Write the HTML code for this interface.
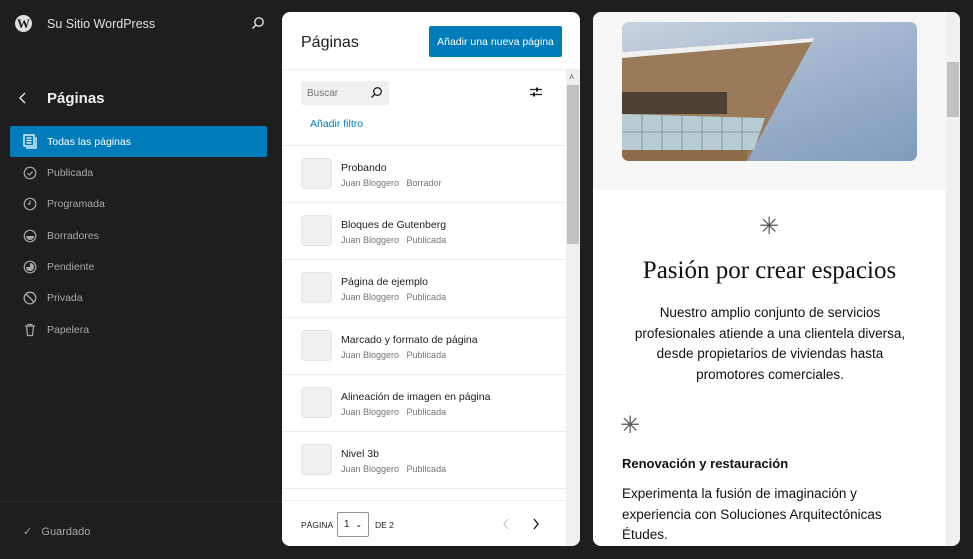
<!DOCTYPE html>
<html><head><meta charset="utf-8"><style>
*{box-sizing:border-box;margin:0;padding:0}
body{width:973px;height:559px;background:#1e1e1e;font-family:"Liberation Sans",sans-serif;position:relative;overflow:hidden;color:#1e1e1e}
.abs{position:absolute}
.side{color:#e0e0e0;font-size:12px}
.nav{position:absolute;left:10px;width:257px;height:31px;display:flex;align-items:center;padding-left:13px;color:#a8a8a8;font-size:10.5px}
.nav svg{margin-right:10px}
.nav.act{background:#007cba;color:#fff;border-radius:2px}
.panel{background:#fff;border-radius:8px;overflow:hidden}
.row{position:absolute;left:0;width:284px;height:57px;border-top:1px solid #ececec}
.thumb{position:absolute;left:19px;top:12px;width:31px;height:31px;background:#f0f0f0;border:1px solid #e4e4e4;border-radius:4px}
.t1{position:absolute;left:59px;top:16px;font-size:10.5px;color:#1e1e1e}
.t2{position:absolute;left:59px;top:32px;font-size:9px;color:#757575}
</style></head><body>
<!-- sidebar -->
<div class="abs" style="left:15px;top:15px;width:17px;height:17px;border-radius:50%;background:#e0e0e0;color:#1e1e1e;font-family:'Liberation Serif',serif;font-weight:bold;font-size:13px;line-height:17px;text-align:center">W</div>
<div class="abs side" style="left:47px;top:17px;font-size:12.5px">Su Sitio WordPress</div>
<svg class="abs" style="left:251px;top:16px" width="14" height="14" viewBox="0 0 14 14"><circle cx="8" cy="6" r="4.2" stroke="#e0e0e0" stroke-width="1.4" fill="none"/><path d="M5 9L1.5 12.5" stroke="#e0e0e0" stroke-width="1.5"/></svg>
<svg class="abs" style="left:18px;top:92px" width="10" height="12"><path d="M7 1L2 6l5 5" stroke="#e0e0e0" stroke-width="1.5" fill="none"/></svg>
<div class="abs" style="left:47px;top:90px;font-size:15px;color:#f0f0f0;font-weight:bold">Páginas</div>
<div class="nav act" style="top:126px"><svg width="14" height="15" viewBox="0 0 14 15"><rect x="1" y="1" width="10" height="11" fill="none" stroke="#fff" stroke-width="1.3"/><path d="M3.5 4h5M3.5 6.5h5M3.5 9h5M13 3v11H3" stroke="#fff" stroke-width="1.2" fill="none"/></svg><span style="color:#fff">Todas las páginas</span></div>
<div class="nav" style="top:157px"><svg width="14" height="14"><circle cx="7" cy="7" r="5.8" fill="none" stroke="#a8a8a8" stroke-width="1.2"/><path d="M4.5 7l2 2 3-3.5" stroke="#a8a8a8" stroke-width="1.2" fill="none"/></svg>Publicada</div>
<div class="nav" style="top:188px"><svg width="14" height="14"><circle cx="7" cy="7" r="5.8" fill="none" stroke="#a8a8a8" stroke-width="1.2"/><path d="M7 3.5V7H4.5" stroke="#a8a8a8" stroke-width="1.2" fill="none"/></svg>Programada</div>
<div class="nav" style="top:220px"><svg width="14" height="14"><circle cx="7" cy="7" r="5.8" fill="none" stroke="#a8a8a8" stroke-width="1.2"/><path d="M3 7h8a4 4 0 0 1-8 0z" fill="#a8a8a8"/></svg>Borradores</div>
<div class="nav" style="top:251px"><svg width="14" height="14"><circle cx="7" cy="7" r="5.8" fill="none" stroke="#a8a8a8" stroke-width="1.2"/><path d="M7 3a4 4 0 1 1-4 4h4z" fill="#a8a8a8"/></svg>Pendiente</div>
<div class="nav" style="top:282px"><svg width="14" height="14"><circle cx="7" cy="7" r="5.8" fill="none" stroke="#a8a8a8" stroke-width="1.3"/><path d="M3 3l8 8" stroke="#a8a8a8" stroke-width="1.3"/></svg>Privada</div>
<div class="nav" style="top:314px"><svg width="14" height="14"><path d="M2 3h10M5 3V1.5h4V3M3.5 3l1 9.5h5l1-9.5" stroke="#a8a8a8" stroke-width="1.2" fill="none"/></svg>Papelera</div>
<div class="abs" style="left:0;top:501px;width:282px;height:1px;background:#2c2c2c"></div>
<div class="abs" style="left:23px;top:525px;font-size:11px;color:#a8a8a8">✓&nbsp;&nbsp;&nbsp;Guardado</div>

<!-- middle panel -->
<div class="abs panel" style="left:282px;top:12px;width:298px;height:534px">
  <div class="abs" style="left:19px;top:22px;font-size:16px">Páginas</div>
  <div class="abs" style="left:147px;top:14px;width:133px;height:31px;background:#007cba;color:#fff;font-size:10.5px;border-radius:2px;display:flex;align-items:center;justify-content:center">Añadir una nueva página</div>
  <div class="abs" style="left:0;top:57px;width:298px;height:1px;background:#eee"></div>
  <div class="abs" style="left:19px;top:69px;width:88px;height:24px;background:#f0f0f0;border-radius:2px;font-size:10px;color:#757575;padding:7px 0 0 6px">Buscar</div>
  <svg class="abs" style="left:88px;top:74px" width="13" height="13"><circle cx="7.5" cy="5.5" r="3.8" stroke="#1e1e1e" stroke-width="1.3" fill="none"/><path d="M5 8l-3.5 3.5" stroke="#1e1e1e" stroke-width="1.4"/></svg>
  <svg class="abs" style="left:247px;top:74px" width="14" height="12"><path d="M1 3.5h12M1 8.5h12" stroke="#1e1e1e" stroke-width="1.2"/><rect x="7" y="1.5" width="2" height="4" fill="#1e1e1e"/><rect x="4" y="6.5" width="2" height="4" fill="#1e1e1e"/></svg>
  <div class="abs" style="left:28px;top:106px;font-size:10.5px;color:#007cba">Añadir filtro</div>
  <div class="row" style="top:133px"><div class="thumb"></div><div class="t1">Probando</div><div class="t2">Juan Bloggero&nbsp;&nbsp; Borrador</div></div>
  <div class="row" style="top:190px"><div class="thumb"></div><div class="t1">Bloques de Gutenberg</div><div class="t2">Juan Bloggero&nbsp;&nbsp; Publicada</div></div>
  <div class="row" style="top:247px"><div class="thumb"></div><div class="t1">Página de ejemplo</div><div class="t2">Juan Bloggero&nbsp;&nbsp; Publicada</div></div>
  <div class="row" style="top:305px"><div class="thumb"></div><div class="t1">Marcado y formato de página</div><div class="t2">Juan Bloggero&nbsp;&nbsp; Publicada</div></div>
  <div class="row" style="top:362px"><div class="thumb"></div><div class="t1">Alineación de imagen en página</div><div class="t2">Juan Bloggero&nbsp;&nbsp; Publicada</div></div>
  <div class="row" style="top:419px"><div class="thumb"></div><div class="t1">Nivel 3b</div><div class="t2">Juan Bloggero&nbsp;&nbsp; Publicada</div></div>
  <div class="row" style="top:476px"></div>
  <div class="abs" style="left:0;top:488px;width:284px;height:46px;background:#fff;border-top:1px solid #eee"></div>
  <div class="abs" style="left:19px;top:508px;font-size:8.5px">PÁGINA</div>
  <div class="abs" style="left:55px;top:500px;width:32px;height:25px;border:1px solid #949494;border-radius:2px;font-size:10px;padding:6px 0 0 6px">1 <span style="font-size:8px;margin-left:3px">⌄</span></div>
  <div class="abs" style="left:93px;top:508px;font-size:8.5px">DE 2</div>
  <svg class="abs" style="left:220px;top:506px" width="8" height="12"><path d="M6 1L2 6l4 5" stroke="#ccc" stroke-width="1.3" fill="none"/></svg>
  <svg class="abs" style="left:250px;top:506px" width="8" height="12"><path d="M2 1l4 5-4 5" stroke="#1e1e1e" stroke-width="1.4" fill="none"/></svg>
  <div class="abs" style="left:284px;top:58px;width:14px;height:476px;background:#f0f0f0"></div>
  <div class="abs" style="left:285px;top:73px;width:12px;height:159px;background:#c1c1c1"></div>
  <div class="abs" style="left:287px;top:60px;font-size:9px;color:#555">˄</div>
</div>

<!-- right panel -->
<div class="abs panel" style="left:593px;top:12px;width:367px;height:534px;font-family:'Liberation Sans',sans-serif">
  <div class="abs" style="left:0;top:0;width:353px;height:178px;background:#f6f6f6"></div>
  <div class="abs" style="left:29px;top:10px;width:295px;height:139px;border-radius:7px;overflow:hidden;background:linear-gradient(160deg,#c9d3df 0%,#9fb3cc 50%,#7f9bbd 100%)">
    <svg width="295" height="139" style="position:absolute;left:0;top:0"><polygon points="0,30 192,16 125,139 0,139" fill="#9a7a58"/><polygon points="0,30 192,16 190,20 0,36" fill="#f0f0f0"/><rect x="0" y="70" width="105" height="22" fill="#4d4035"/><polygon points="0,92 143,96 132,128 0,128" fill="#b8cdd3"/><rect x="0" y="128" width="125" height="11" fill="#8e6c4a"/><path d="M0 110h138M20 92v36M40 93v35M60 93v35M80 94v34M100 94v34M120 95v33" stroke="#6f8a94" stroke-width="0.8"/></svg>
  </div>
  <div class="abs" style="left:0;top:178px;width:353px;height:356px;background:#fff"></div>
  <div class="abs" style="left:166px;top:200px;font-size:24px;color:#555;font-family:'DejaVu Sans',sans-serif">✳</div>
  <div class="abs" style="left:0;top:245px;width:353px;text-align:center;font-family:'Liberation Serif',serif;font-size:25px;color:#111">Pasión por crear espacios</div>
  <div class="abs" style="left:34px;top:291px;width:286px;text-align:center;font-size:13.5px;line-height:20.7px;color:#111">Nuestro amplio conjunto de servicios profesionales atiende a una clientela diversa, desde propietarios de viviendas hasta promotores comerciales.</div>
  <div class="abs" style="left:27px;top:399px;font-size:24px;color:#555;font-family:'DejaVu Sans',sans-serif">✳</div>
  <div class="abs" style="left:29px;top:444px;font-size:13px;font-weight:bold;color:#111">Renovación y restauración</div>
  <div class="abs" style="left:29px;top:472px;width:300px;font-size:13.5px;line-height:20.7px;color:#111">Experimenta la fusión de imaginación y experiencia con Soluciones Arquitectónicas Études.</div>
  <div class="abs" style="left:353px;top:0;width:14px;height:534px;background:#f0f0f0"></div>
  <div class="abs" style="left:354px;top:50px;width:12px;height:55px;background:#c1c1c1"></div>
</div>
</body></html>
